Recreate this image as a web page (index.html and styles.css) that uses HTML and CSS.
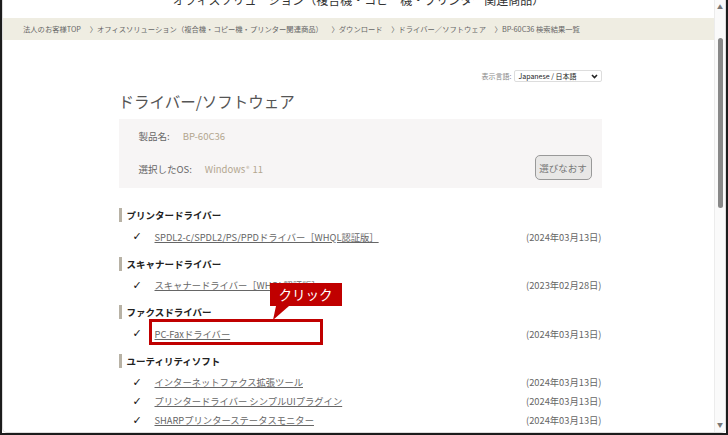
FILE: index.html
```html
<!DOCTYPE html>
<html lang="ja">
<head>
    <meta charset="UTF-8">
    <meta name="viewport" content="width=device-width, initial-scale=1.0">
    <title>ドライバー/ソフトウェア</title>
    <link rel="stylesheet" href="styles.css">
</head>
<body>
    <div class="frame">
        <div class="window">
            <div class="page">
                <div class="site-title"><span>オフィスソリューション（複合機・コピー機・プリンター関連商品）</span></div>

                <div class="breadcrumb">
                    <a href="#">法人のお客様TOP</a>
                    <span class="sep">〉</span><a href="#">オフィスソリューション（複合機・コピー機・プリンター関連商品）</a>
                    <span class="sep">〉</span><a href="#">ダウンロード</a>
                    <span class="sep">〉</span><a href="#">ドライバー／ソフトウェア</a>
                    <span class="sep">〉</span><span>BP-60C36 検索結果一覧</span>
                </div>

                <div class="main">
                    <div class="column">
                        <div class="lang-row">
                            <span class="lang-label">表示言語:</span>
                            <div class="lang-select">
                                <span>Japanese / 日本語</span>
                                <svg width="7" height="5" viewBox="0 0 7 5"><path d="M1 1 L3.5 3.5 L6 1" fill="none" stroke="#222" stroke-width="1.6"/></svg>
                            </div>
                        </div>

                        <h1>ドライバー/ソフトウェア</h1>

                        <div class="product-box">
                            <div class="info-row">
                                <span class="info-label">製品名:</span>
                                <span class="info-value">BP-60C36</span>
                            </div>
                            <div class="info-row os-row">
                                <span class="info-label">選択したOS:</span>
                                <span class="info-value">Windows<span class="reg">®</span> 11</span>
                                <button class="reselect">選びなおす</button>
                            </div>
                        </div>

                        <div class="section">
                            <h2>プリンタードライバー</h2>
                            <ul>
                                <li><span class="check">✓</span><a href="#">SPDL2-c/SPDL2/PS/PPDドライバー［WHQL認証版］</a><span class="date">(2024年03月13日)</span></li>
                            </ul>
                        </div>

                        <div class="section">
                            <h2>スキャナードライバー</h2>
                            <ul>
                                <li><span class="check">✓</span><a href="#">スキャナードライバー［WHQL認証版］</a><span class="date">(2023年02月28日)</span></li>
                            </ul>
                        </div>

                        <div class="section">
                            <h2>ファクスドライバー</h2>
                            <ul>
                                <li class="marked">
                                    <span class="check">✓</span><a href="#">PC-Faxドライバー</a><span class="date">(2024年03月13日)</span>
                                    <div class="highlight"></div>
                                    <div class="callout">クリック
                                        <svg class="tail" width="20" height="14" viewBox="0 0 20 14"><polygon points="6,0 19,0 3,14" fill="#c00000"/></svg>
                                    </div>
                                </li>
                            </ul>
                        </div>

                        <div class="section">
                            <h2>ユーティリティソフト</h2>
                            <ul>
                                <li><span class="check">✓</span><a href="#">インターネットファクス拡張ツール</a><span class="date">(2024年03月13日)</span></li>
                                <li><span class="check">✓</span><a href="#">プリンタードライバー シンプルUIプラグイン</a><span class="date">(2024年03月13日)</span></li>
                                <li><span class="check">✓</span><a href="#">SHARPプリンターステータスモニター</a><span class="date">(2024年03月13日)</span></li>
                            </ul>
                        </div>
                    </div>
                </div>
            </div>

            <div class="scrollbar">
                <div class="arrow">▲</div>
                <div class="track"><div class="thumb"></div></div>
                <div class="arrow">▼</div>
            </div>
        </div>
    </div>
</body>
</html>
```

FILE: styles.css
```css
body {
    margin: 0;
    font-family: "Noto Sans CJK JP", "Noto Sans", sans-serif;
    background: white;
}
.frame {
    width: 728px;
    height: 435px;
    box-sizing: border-box;
    border: 2px solid #1c1c1c;
    border-top: none;
}
.window {
    height: 100%;
    box-sizing: border-box;
    border: 1px solid #dcdcdc;
    border-top: none;
    border-radius: 0 0 5px 5px;
    overflow: hidden;
    display: flex;
}
.page {
    flex: 1;
    overflow: hidden;
}
.site-title {
    height: 18px;
    overflow: hidden;
    text-align: center;
    font-size: 12px;
    color: #333;
}
.site-title span {
    display: block;
    line-height: 12px;
    margin-top: -6px;
}
.breadcrumb {
    height: 22px;
    line-height: 22px;
    background: #efede2;
    padding-left: 20px;
    font-size: 7.3px;
    color: #666;
    white-space: nowrap;
}
.breadcrumb a { color: #666; text-decoration: none; }
.breadcrumb .sep { margin: 0 0 0 7px; }

.main {
    padding: 30px 0 0 3px;
}
.column {
    width: 483px;
    margin: 0 auto;
}
.lang-row {
    display: flex;
    justify-content: flex-end;
    align-items: center;
    gap: 2px;
    height: 12px;
}
.lang-label { font-size: 7px; color: #888; }
.lang-select {
    width: 88px;
    height: 12px;
    box-sizing: border-box;
    border: 1px solid #ddd;
    border-radius: 2px;
    display: flex;
    align-items: center;
    justify-content: space-between;
    padding: 0 3px 0 4px;
    font-size: 7px;
    color: #222;
}
h1 {
    margin: 8px 0 7px;
    font-size: 15.5px;
    line-height: 22px;
    font-weight: normal;
    color: #555;
}
.product-box {
    height: 69px;
    box-sizing: border-box;
    background: #f7f5f5;
    padding: 10px 10px 8px 20px;
}
.info-row {
    display: flex;
    align-items: center;
    gap: 13px;
    height: 14px;
    font-size: 9.5px;
}
.os-row {
    margin-top: 12px;
    height: 25px;
}
.os-row .info-label, .os-row .info-value { padding-top: 3px; }
.info-label { color: #666; }
.info-value { color: #b3a68f; }
.info-value .reg {
    font-size: 6.5px;
    position: relative;
    top: -2px;
    margin: 0 1px;
}
.reselect {
    margin-left: auto;
    width: 57px;
    height: 25px;
    background: #e8e7e6;
    border: 1px solid #999;
    border-radius: 5px;
    font-family: inherit;
    font-size: 9.5px;
    color: #777;
    padding: 0;
}

.section { margin-top: 10.5px; }
.product-box + .section { margin-top: 20px; }
h2 {
    margin: 0;
    height: 14px;
    line-height: 14px;
    border-left: 3px solid #b8b2a5;
    padding-left: 5px;
    font-size: 9.5px;
    font-weight: bold;
    color: #222;
}
ul {
    list-style: none;
    margin: 5px 0 0;
    padding: 0;
}
li {
    display: flex;
    align-items: center;
    height: 19px;
    padding-left: 14px;
    font-size: 9.3px;
    position: relative;
}
.check {
    width: 22px;
    font-family: "DejaVu Sans", sans-serif;
    font-weight: bold;
    font-size: 11px;
    color: #111;
}
li a {
    color: #666;
    text-decoration: underline;
}
.date {
    margin-left: auto;
    color: #666;
}

.highlight {
    position: absolute;
    left: 30px;
    top: -5px;
    width: 174px;
    height: 26px;
    box-sizing: border-box;
    border: 3px solid #c00000;
}
.callout {
    position: absolute;
    left: 151px;
    top: -41px;
    width: 72px;
    height: 23px;
    background: #c00000;
    color: white;
    font-size: 13.5px;
    line-height: 23px;
    text-align: center;
}
.tail {
    position: absolute;
    left: 0;
    top: 23px;
}

.scrollbar {
    width: 10px;
    border-left: 1px solid #ececec;
    background: #fafafa;
    display: flex;
    flex-direction: column;
    align-items: center;
}
.arrow {
    height: 14px;
    line-height: 14px;
    font-size: 6px;
    color: #777;
}
.track {
    flex: 1;
    padding-top: 24px;
}
.thumb {
    width: 5px;
    height: 170px;
    border-radius: 3px;
    background: #888;
}
```
